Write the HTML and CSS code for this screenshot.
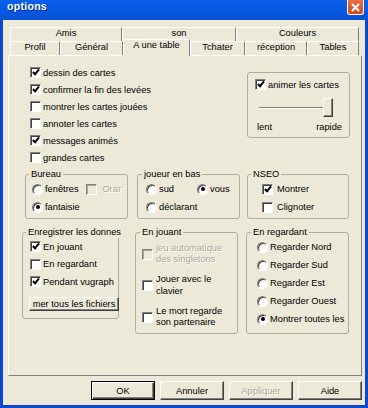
FILE: index.html
```html
<!DOCTYPE html>
<html lang="fr">
<head>
  <meta charset="UTF-8" />
  <title>options</title>
  <link rel="stylesheet" href="styles.css">
</head>
<body>

  <div class="window">
    <div class="titlebar">
      <span class="title">options</span>
      <span class="close">
        <svg width="9" height="9" viewBox="0 0 9 9"><path d="M1 1L8 8M8 1L1 8" stroke="#fff" stroke-width="2" /></svg>
      </span>
    </div>

    <div class="content">
      <!-- onglets -->
      <div class="tabrow">
        <div class="tab t-amis">Amis</div>
        <div class="tab t-son">son</div>
        <div class="tab t-couleurs">Couleurs</div>
      </div>
      <div class="tabrow front">
        <div class="tab t-profil">Profil</div>
        <div class="tab t-general">Général</div>
        <div class="tab t-table active">A une table</div>
        <div class="tab t-tchater">Tchater</div>
        <div class="tab t-reception">réception</div>
        <div class="tab t-tables">Tables</div>
      </div>

      <div class="panel">
        <div class="sec-top">
          <div class="checklist">
            <label class="opt"><span class="cb on"></span>dessin des cartes</label>
            <label class="opt"><span class="cb on"></span>confirmer la fin des levées</label>
            <label class="opt"><span class="cb"></span>montrer les cartes jouées</label>
            <label class="opt"><span class="cb"></span>annoter les cartes</label>
            <label class="opt"><span class="cb on"></span>messages animés</label>
            <label class="opt"><span class="cb"></span>grandes cartes</label>
          </div>
          <div class="animbox">
            <label class="opt"><span class="cb on"></span>animer les cartes</label>
            <div class="slider"><div class="track"></div><div class="thumb"></div></div>
            <div class="slider-labels"><span>lent</span><span>rapide</span></div>
          </div>
        </div>

        <div class="sec-mid">
          <fieldset class="grp g-bureau">
            <legend>Bureau</legend>
            <div class="line">
              <label class="opt first"><span class="rb"></span>fenêtres</label>
              <label class="opt dis"><span class="cb"></span>Orar</label>
            </div>
            <label class="opt"><span class="rb on"></span>fantaisie</label>
          </fieldset>
          <fieldset class="grp g-joueur">
            <legend>joueur en bas</legend>
            <div class="line">
              <label class="opt first"><span class="rb"></span>sud</label>
              <label class="opt"><span class="rb on"></span>vous</label>
            </div>
            <label class="opt"><span class="rb"></span>déclarant</label>
          </fieldset>
          <fieldset class="grp g-nseo">
            <legend>NSEO</legend>
            <label class="opt"><span class="cb on"></span>Montrer</label>
            <label class="opt"><span class="cb"></span>Clignoter</label>
          </fieldset>
        </div>

        <div class="sec-bot">
          <fieldset class="grp g-enreg">
            <legend>Enregistrer les donnes</legend>
            <label class="opt"><span class="cb on"></span>En jouant</label>
            <label class="opt"><span class="cb"></span>En regardant</label>
            <label class="opt"><span class="cb on"></span>Pendant vugraph</label>
            <button class="btn small">mer tous les fichiers</button>
          </fieldset>
          <fieldset class="grp g-jouant">
            <legend>En jouant</legend>
            <label class="opt multi dis"><span class="cb"></span><span class="txt">jeu automatique des singletons</span></label>
            <label class="opt multi"><span class="cb"></span><span class="txt">Jouer avec le clavier</span></label>
            <label class="opt multi"><span class="cb"></span><span class="txt">Le mort regarde son partenaire</span></label>
          </fieldset>
          <fieldset class="grp g-regard">
            <legend>En regardant</legend>
            <label class="opt"><span class="rb"></span>Regarder Nord</label>
            <label class="opt"><span class="rb"></span>Regarder Sud</label>
            <label class="opt"><span class="rb"></span>Regarder Est</label>
            <label class="opt"><span class="rb"></span>Regarder Ouest</label>
            <label class="opt"><span class="rb on"></span>Montrer toutes les</label>
          </fieldset>
        </div>
      </div>

      <div class="buttons">
        <button class="btn default">OK</button>
        <button class="btn">Annuler</button>
        <button class="btn disabled">Appliquer</button>
        <button class="btn">Aide</button>
      </div>
    </div>
  </div>

</body>
</html>
```

FILE: styles.css
```css
body {
  margin: 0;
  font-family: "Liberation Sans", Arial, sans-serif;
  font-size: 9.3px;
  color: #000;
  background-color: #ece9d8;
}

.window {
  width: 368px;
  height: 408px;
  box-sizing: border-box;
  background-color: #ece9d8;
  border: 3px solid #0b47d1;
  border-top: none;
}

/* barre de titre */
.titlebar {
  height: 20px;
  margin: 0 -3px;
  padding: 0 4px 0 7px;
  background: linear-gradient(#0a60ea, #0558e2 60%, #0a50d4);
  display: flex;
  justify-content: space-between;
  align-items: flex-start;
}

.title {
  color: white;
  font-weight: bold;
  font-size: 10.5px;
  line-height: 13px;
  letter-spacing: 0.3px;
  text-shadow: 1px 1px #0a2a8a;
}

.close {
  width: 17px;
  height: 15px;
  box-sizing: border-box;
  background: linear-gradient(#e8704a, #d04a1e);
  border: 1px solid white;
  border-top: none;
  border-radius: 0 0 3px 3px;
  display: flex;
  align-items: center;
  justify-content: center;
}

.content {
  padding: 7px 3px 0 5px;
}

/* onglets */
.tabrow {
  display: flex;
  margin: 0 2px;
  height: 14px;
}

.tab {
  box-sizing: border-box;
  height: 14px;
  line-height: 11px;
  text-align: center;
  border-top: 1px solid white;
  border-left: 1px solid white;
  border-right: 1px solid #808080;
  white-space: nowrap;
}

.t-amis { width: 112px; }
.t-son { width: 114px; }
.t-couleurs { width: 123px; }
.t-profil { width: 50px; }
.t-general { width: 63px; }
.t-table { width: 67px; }
.t-tchater { width: 55px; }
.t-reception { width: 62px; }
.t-tables { width: 52px; }

.tab.active {
  position: relative;
  z-index: 1;
  height: 17px;
  margin-top: -2px;
  background-color: #ece9d8;
}

.panel {
  box-sizing: border-box;
  height: 321px;
  border: 1px solid;
  border-color: white #808080 #808080 white;
  padding-top: 8px;
}

/* cases et boutons radio */
.opt {
  display: flex;
  align-items: center;
  height: 17px;
  white-space: nowrap;
}

.cb {
  flex: none;
  width: 11px;
  height: 11px;
  box-sizing: border-box;
  margin-right: 2px;
  background-color: white;
  border: 1px solid;
  border-color: #808080 white white #808080;
  box-shadow: inset 1px 1px #404040;
  display: flex;
  align-items: center;
  justify-content: center;
}

.cb.on::after {
  content: "";
  width: 2px;
  height: 5px;
  margin-top: -2px;
  border: solid #000;
  border-width: 0 2px 2px 0;
  transform: rotate(40deg);
}

.rb {
  flex: none;
  width: 11px;
  height: 11px;
  box-sizing: border-box;
  margin-right: 2px;
  border-radius: 50%;
  background-color: white;
  border: 1px solid;
  border-color: #808080 white white #808080;
  box-shadow: inset 1px 1px #404040;
  display: flex;
  align-items: center;
  justify-content: center;
}

.rb.on::after {
  content: "";
  width: 4px;
  height: 4px;
  border-radius: 50%;
  background-color: #000;
}

.opt.dis {
  color: #aca899;
  text-shadow: 1px 1px white;
}

.opt.dis .cb {
  background-color: #ece9d8;
  box-shadow: inset 1px 1px #aca899;
}

/* haut du panneau */
.sec-top {
  display: flex;
  align-items: flex-start;
}

.checklist {
  margin-left: 21px;
}

.animbox {
  margin: 8px 11px 0 auto;
  width: 103px;
  height: 66px;
  box-sizing: border-box;
  border: 1px solid #b0ada0;
  border-radius: 3px;
  padding-top: 3px;
}

.animbox .opt {
  margin-left: 7px;
}

.slider {
  display: flex;
  align-items: center;
  height: 19px;
  margin: 5px 0 0 11px;
}

.track {
  width: 64px;
  height: 0;
  border-top: 1px solid #808080;
  border-bottom: 1px solid white;
}

.thumb {
  width: 10px;
  height: 19px;
  box-sizing: border-box;
  background-color: #ece9d8;
  border: 1px solid;
  border-color: white #404040 #404040 white;
  box-shadow: inset -1px -1px #808080;
}

.slider-labels {
  display: flex;
  justify-content: space-between;
  line-height: 11px;
  margin: 5px 7px 0 9px;
}

/* groupes */
.grp {
  margin: 0;
  min-width: 0;
  box-sizing: border-box;
  border: 1px solid #b0ada0;
  border-radius: 3px;
  padding: 0 6px 2px;
}

.grp legend {
  line-height: 11px;
  padding: 0 2px;
  margin-left: -3px;
  white-space: nowrap;
}

.sec-mid {
  display: flex;
  align-items: flex-start;
  margin-top: 3px;
  padding-left: 16px;
}

.sec-mid .opt {
  height: 18px;
}

.line {
  display: flex;
}

.g-bureau {
  width: 103px;
}

.g-bureau .first {
  width: 56px;
}

.g-bureau .dis .cb {
  margin-right: 5px;
}

.g-joueur {
  width: 103px;
  margin-left: 9px;
  padding-left: 8px;
}

.g-joueur legend {
  margin-left: -4px;
}

.g-joueur .first {
  width: 51px;
}

.g-nseo {
  width: 102px;
  margin-left: 7px;
  padding-left: 14px;
}

.g-nseo legend {
  margin-left: -11px;
}

.g-nseo .cb {
  margin-right: 4px;
}

.sec-bot {
  display: flex;
  align-items: flex-start;
  margin-top: 8px;
  padding-left: 13px;
}

.g-enreg {
  width: 97px;
  padding: 0 0 7px 7px;
}

.g-enreg legend {
  margin-left: -4px;
}

.g-enreg .opt {
  height: 17.5px;
}

.g-jouant {
  width: 103px;
  height: 107px;
  margin-left: 16px;
  padding: 4.5px 0 0 6px;
}

.g-jouant legend {
  margin-left: -2px;
}

.opt.multi {
  height: 23px;
  margin-bottom: 8.5px;
  white-space: normal;
  line-height: 11.5px;
}

.opt.multi .cb {
  margin-right: 3px;
}

.opt.multi .txt {
  width: 74px;
}

.g-regard {
  width: 103px;
  height: 107px;
  margin-left: 8px;
  padding-left: 10px;
}

.g-regard legend {
  margin-left: -6px;
}

.g-regard .opt {
  height: 18px;
}

/* boutons */
.btn {
  box-sizing: border-box;
  width: 64px;
  height: 19px;
  padding: 0;
  font: inherit;
  color: #000;
  background-color: #ece9d8;
  border: 1px solid;
  border-color: white #404040 #404040 white;
  box-shadow: inset -1px -1px #808080;
}

.btn.default {
  border-color: #000;
  box-shadow: inset 1px 1px white, inset -1px -1px #404040, inset -2px -2px #808080;
}

.btn.disabled {
  color: #aca899;
  text-shadow: 1px 1px white;
}

.btn.small {
  width: 90px;
  height: 14px;
  margin: 6.5px 0 0 -1px;
  white-space: nowrap;
  overflow: hidden;
}

.buttons {
  display: flex;
  justify-content: flex-end;
  gap: 5px;
  margin-top: 5px;
}
```
